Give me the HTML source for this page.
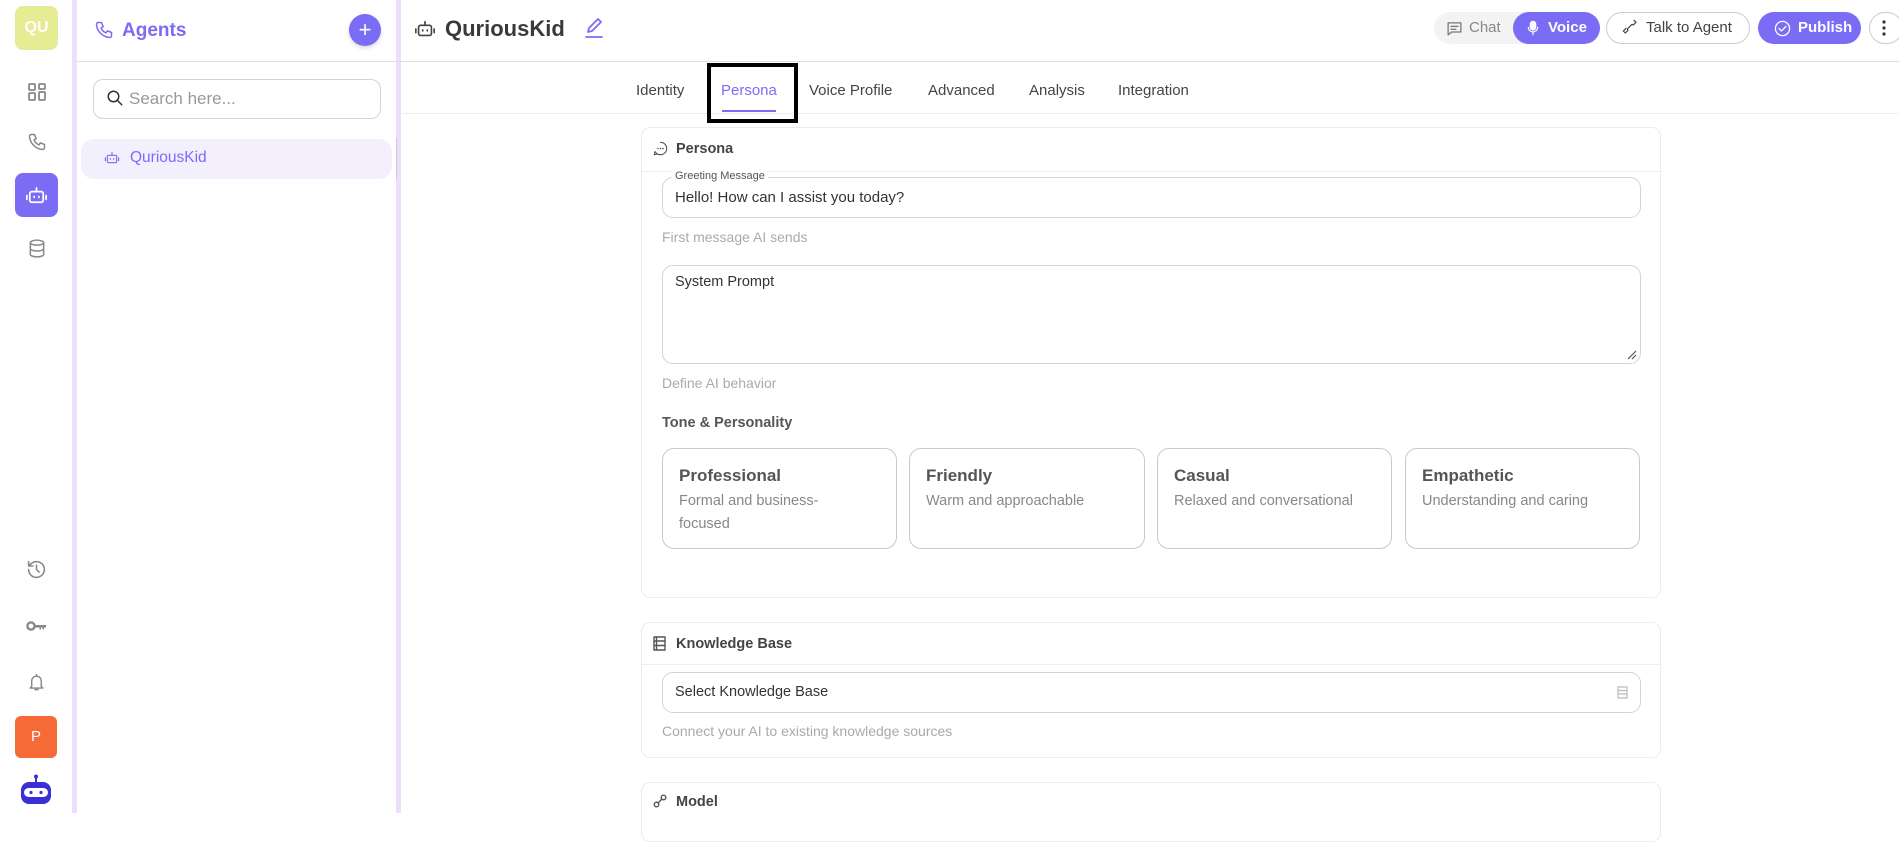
<!DOCTYPE html>
<html><head><meta charset="utf-8"><style>
*{box-sizing:border-box;margin:0;padding:0}
body{width:1899px;height:813px;overflow:hidden;background:#fff;font-family:"Liberation Sans",sans-serif;color:#444;position:relative}
.a{position:absolute}
.ic{position:absolute;fill:none;stroke:#888;stroke-width:1.8;stroke-linecap:round;stroke-linejoin:round}
.t{position:absolute;white-space:nowrap}
.card{position:absolute;border:1px solid #ececec;border-radius:9px;background:#fff}
.inp{position:absolute;border:1px solid #d4d4d4;border-radius:11px}
.tone{position:absolute;top:448px;height:101px;border:1px solid #c9c9c9;border-radius:12px}
.tone b{position:absolute;left:16px;top:17px;font-size:17px;color:#555;font-weight:bold}
.tone span{position:absolute;left:16px;top:41px;font-size:14.5px;color:#888;line-height:23px;width:170px}
.tab{position:absolute;top:82px;font-size:15px;color:#444}
</style></head><body>
<div class="a" style="left:15px;top:6px;width:43px;height:44px;background:#e6ec94;border-radius:8px;color:#fff;font-weight:bold;font-size:16px;text-align:center;line-height:44px">QU</div>
<svg class="ic" style="left:27px;top:82px" width="20" height="20" viewBox="0 0 20 20"><rect x="2" y="2" width="6" height="6" rx="1"/><rect x="12" y="2" width="6" height="5" rx="1"/><rect x="2" y="11" width="6" height="7" rx="1"/><rect x="12" y="10" width="6" height="8" rx="1"/></svg>
<svg class="ic" style="left:27px;top:132px" width="20" height="20" viewBox="0 0 24 24"><path d="M5 3h4l2 5-2.5 1.5a11 11 0 0 0 6 6L16 13l5 2v4a2 2 0 0 1-2 2A17 17 0 0 1 3 5a2 2 0 0 1 2-2"/></svg>
<div class="a" style="left:15px;top:173px;width:43px;height:44px;background:#7b6cf6;border-radius:8px"></div>
<svg class="ic" style="left:25px;top:184px;stroke:#fff" width="23" height="23" viewBox="0 0 24 24"><rect x="5" y="8" width="14" height="11" rx="2"/><path d="M12 8V4M2 12v4M22 12v4M9.5 13v1M14.5 13v1"/></svg>
<svg class="ic" style="left:27px;top:238px" width="20" height="21" viewBox="0 0 24 24"><ellipse cx="12" cy="5" rx="8" ry="3"/><path d="M4 5v14c0 1.7 3.6 3 8 3s8-1.3 8-3V5M4 12c0 1.7 3.6 3 8 3s8-1.3 8-3"/></svg>
<svg class="ic" style="left:26px;top:559px" width="21" height="21" viewBox="0 0 24 24"><path d="M3 12a9 9 0 1 0 3-6.7L3 8M3 3v5h5M12 7v5l3 3"/></svg>
<svg class="a" style="left:26px;top:620px" width="21" height="12" viewBox="0 0 21 12"><circle cx="5" cy="6" r="3.6" fill="none" stroke="#888" stroke-width="2.4"/><path d="M8 5h12v2.5h-2v2h-1.5v-2h-1.5v2h-1.5v-2H8z" fill="#888"/></svg>
<svg class="ic" style="left:27px;top:672px" width="19" height="21" viewBox="0 0 24 24"><path d="M6 17V10a6 6 0 0 1 12 0v7l2 2H4zM12 2v2M10 21h4"/></svg>
<div class="a" style="left:15px;top:716px;width:42px;height:42px;background:#f66a37;border-radius:6px;color:#fff;font-size:15px;text-align:center;line-height:42px">P</div>
<svg class="a" style="left:20px;top:774px" width="32" height="32" viewBox="0 0 32 32"><circle cx="16" cy="2.5" r="2" fill="#3b2fd6"/><rect x="15" y="3" width="2" height="5" fill="#3b2fd6"/><rect x="1" y="8" width="30" height="22" rx="8" fill="#3b2fd6"/><rect x="4" y="14" width="24" height="9" rx="4.5" fill="#fff"/><circle cx="11" cy="18.5" r="1.6" fill="#3b2fd6"/><circle cx="21" cy="18.5" r="1.6" fill="#3b2fd6"/></svg>
<div class="a" style="left:72px;top:0;width:5px;height:813px;background:#ecdffc"></div>
<div class="a" style="left:396px;top:0;width:5px;height:813px;background:#ecdffc"></div>
<svg class="ic" style="left:94px;top:20px;stroke:#7b6cf6" width="20" height="20" viewBox="0 0 24 24"><path d="M5 3h4l2 5-2.5 1.5a11 11 0 0 0 6 6L16 13l5 2v4a2 2 0 0 1-2 2A17 17 0 0 1 3 5a2 2 0 0 1 2-2"/></svg>
<div class="t" style="left:122px;top:20px;font-size:19px;font-weight:bold;color:#7b6cf6">Agents</div>
<div class="a" style="left:349px;top:14px;width:32px;height:32px;border-radius:50%;background:#7b6cf6;color:#fff;font-size:22px;text-align:center;line-height:31px;box-shadow:0 2px 4px rgba(0,0,0,.15)">+</div>
<div class="a" style="left:77px;top:61px;width:1822px;height:1px;background:#dedede"></div>
<div class="inp" style="left:93px;top:79px;width:288px;height:40px;border-radius:10px"></div>
<svg class="ic" style="left:106px;top:89px;stroke:#333;stroke-width:2" width="18" height="18" viewBox="0 0 24 24"><circle cx="10" cy="10" r="7"/><path d="M15 15l6 6"/></svg>
<div class="t" style="left:129px;top:89px;font-size:17px;color:#999">Search here...</div>
<div class="a" style="left:81px;top:139px;width:311px;height:40px;background:#f3effd;border-radius:13px"></div>
<div class="a" style="left:396px;top:138px;width:1px;height:41px;background:#ccc"></div>
<svg class="ic" style="left:104px;top:150px;stroke:#7b6cf6" width="16" height="16" viewBox="0 0 24 24"><rect x="5" y="8" width="14" height="11" rx="2"/><path d="M12 8V4M2 12v4M22 12v4M9.5 13v1M14.5 13v1"/></svg>
<div class="t" style="left:130px;top:149px;font-size:15.5px;color:#7b6cf6">QuriousKid</div>
<svg class="ic" style="left:414px;top:18px;stroke:#444" width="22" height="22" viewBox="0 0 24 24"><rect x="5" y="8" width="14" height="11" rx="2"/><path d="M12 8V4M2 12v4M22 12v4M9.5 13v1M14.5 13v1"/></svg>
<div class="t" style="left:445px;top:16px;font-size:22px;font-weight:bold;color:#3a3a3a">QuriousKid</div>
<svg class="ic" style="left:584px;top:17px;stroke:#7b6cf6" width="20" height="22" viewBox="0 0 20 22"><path d="M4 15l1-4 9-9 3 3-9 9zM2 20h16"/></svg>
<div class="a" style="left:1434px;top:12px;width:166px;height:32px;background:#f3f3f3;border-radius:16px"></div>
<svg class="ic" style="left:1446px;top:20px;stroke:#777" width="17" height="17" viewBox="0 0 24 24"><path d="M3 4h18v13H8l-5 4zM7 9h10M7 13h7"/></svg>
<div class="t" style="left:1469px;top:19px;font-size:15px;color:#888">Chat</div>
<div class="a" style="left:1513px;top:12px;width:87px;height:32px;background:#7b6cf6;border-radius:16px"></div>
<svg class="ic" style="left:1525px;top:19px;stroke:#fff" width="16" height="18" viewBox="0 0 24 24"><rect x="8" y="2" width="8" height="13" rx="4" fill="#fff"/><path d="M5 11a7 7 0 0 0 14 0M12 18v4"/></svg>
<div class="t" style="left:1548px;top:19px;font-size:15px;font-weight:bold;color:#fff">Voice</div>
<div class="a" style="left:1606px;top:12px;width:144px;height:32px;border:1px solid #ccc;border-radius:16px"></div>
<svg class="ic" style="left:1622px;top:19px;stroke:#444" width="16" height="16" viewBox="0 0 24 24"><path d="M18 2l3 3-4 4-2-1-7 7 1 2-4 4-3-3 4-4"/></svg>
<div class="t" style="left:1646px;top:19px;font-size:15px;color:#444">Talk to Agent</div>
<div class="a" style="left:1758px;top:12px;width:103px;height:32px;background:#7b6cf6;border-radius:16px"></div>
<svg class="ic" style="left:1774px;top:20px;stroke:#fff" width="17" height="17" viewBox="0 0 24 24"><circle cx="12" cy="12" r="10"/><path d="M7 12l3.5 3.5L17 9"/></svg>
<div class="t" style="left:1798px;top:19px;font-size:15px;font-weight:bold;color:#fff">Publish</div>
<div class="a" style="left:1869px;top:12px;width:34px;height:32px;border:1px solid #ccc;border-radius:16px"></div>
<svg class="a" style="left:1882px;top:20px" width="4" height="16"><circle cx="2" cy="2" r="1.6" fill="#333"/><circle cx="2" cy="8" r="1.6" fill="#333"/><circle cx="2" cy="14" r="1.6" fill="#333"/></svg>
<div class="tab" style="left:636px">Identity</div>
<div class="tab" style="left:721px;color:#7b6cf6">Persona</div>
<div class="tab" style="left:809px">Voice Profile</div>
<div class="tab" style="left:928px">Advanced</div>
<div class="tab" style="left:1029px">Analysis</div>
<div class="tab" style="left:1118px">Integration</div>
<div class="a" style="left:722px;top:110px;width:54px;height:2px;background:#7b6cf6"></div>
<div class="a" style="left:402px;top:113px;width:1497px;height:1px;background:#eee"></div>
<div class="a" style="left:707px;top:63px;width:91px;height:60px;border:4px solid #000"></div>
<div class="card" style="left:641px;top:127px;width:1020px;height:471px"></div>
<svg class="ic" style="left:653px;top:141px;stroke:#444;stroke-width:1.6" width="15" height="15" viewBox="0 0 24 24"><path d="M12 2a10 10 0 1 1-8.7 14.9L2 22l5.1-1.3A10 10 0 0 0 12 22"/><path d="M8 12h.01M12 12h.01M16 12h.01" stroke-width="2.4"/></svg>
<div class="t" style="left:676px;top:141px;font-size:14.5px;font-weight:bold;color:#444">Persona</div>
<div class="a" style="left:642px;top:171px;width:1018px;height:1px;background:#eee"></div>
<div class="inp" style="left:662px;top:177px;width:979px;height:41px"></div>
<div class="t" style="left:672px;top:170px;font-size:11px;color:#555;background:#fff;padding:0 3px">Greeting Message</div>
<div class="t" style="left:675px;top:189px;font-size:15px;color:#333">Hello! How can I assist you today?</div>
<div class="t" style="left:662px;top:229px;font-size:14px;color:#aaa">First message AI sends</div>
<div class="inp" style="left:662px;top:265px;width:979px;height:99px"></div>
<div class="t" style="left:675px;top:274px;font-size:14.5px;color:#333">System Prompt</div>
<svg class="a" style="left:1627px;top:350px" width="10" height="10"><path d="M1 9L9 1M5 9L9 5" stroke="#555" stroke-width="1.2"/></svg>
<div class="t" style="left:662px;top:375px;font-size:14px;color:#aaa">Define AI behavior</div>
<div class="t" style="left:662px;top:415px;font-size:14.5px;font-weight:bold;color:#555">Tone &amp; Personality</div>
<div class="tone" style="left:662px;width:235px"><b>Professional</b><span>Formal and business-<br>focused</span></div>
<div class="tone" style="left:909px;width:236px"><b>Friendly</b><span>Warm and approachable</span></div>
<div class="tone" style="left:1157px;width:235px"><b>Casual</b><span style="width:220px">Relaxed and conversational</span></div>
<div class="tone" style="left:1405px;width:235px"><b>Empathetic</b><span style="width:220px">Understanding and caring</span></div>
<div class="card" style="left:641px;top:622px;width:1020px;height:136px"></div>
<svg class="ic" style="left:653px;top:636px;stroke:#555;stroke-width:1.4" width="13" height="15" viewBox="0 0 13 15"><rect x="1" y="1" width="11" height="13"/><path d="M1 5h11M1 9.5h11M3.5 1v13"/></svg>
<div class="t" style="left:676px;top:636px;font-size:14.5px;font-weight:bold;color:#444">Knowledge Base</div>
<div class="a" style="left:642px;top:664px;width:1018px;height:1px;background:#eee"></div>
<div class="inp" style="left:662px;top:672px;width:979px;height:41px"></div>
<div class="t" style="left:675px;top:684px;font-size:14.5px;color:#333">Select Knowledge Base</div>
<svg class="ic" style="left:1617px;top:686px;stroke:#bbb;stroke-width:1.2" width="11" height="13" viewBox="0 0 11 13"><rect x="1" y="1" width="9" height="11"/><path d="M1 4.5h9M1 8h9"/></svg>
<div class="t" style="left:662px;top:723px;font-size:14px;color:#aaa">Connect your AI to existing knowledge sources</div>
<div class="card" style="left:641px;top:782px;width:1020px;height:60px"></div>
<svg class="ic" style="left:653px;top:794px;stroke:#555;stroke-width:1.4" width="14" height="14" viewBox="0 0 14 14"><circle cx="3.5" cy="10.5" r="2.3"/><circle cx="10.5" cy="3.5" r="2.3"/><path d="M5 9l4-4"/></svg>
<div class="t" style="left:676px;top:794px;font-size:14.5px;font-weight:bold;color:#444">Model</div>
</body></html>
